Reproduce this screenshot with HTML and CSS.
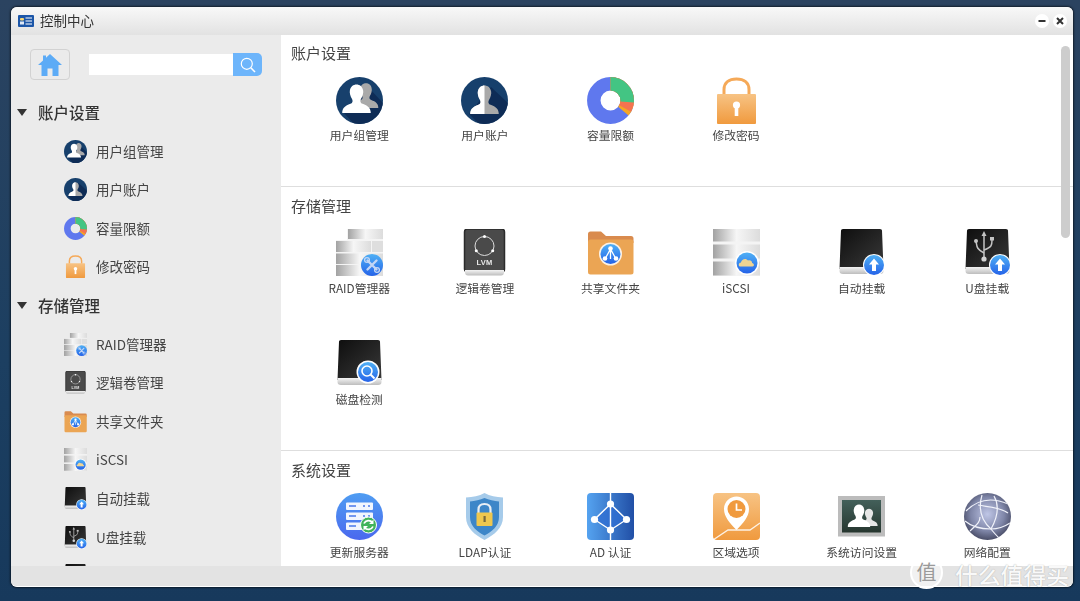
FILE: index.html
```html
<!DOCTYPE html>
<html lang="zh">
<head>
<meta charset="utf-8">
<title>控制中心</title>
<link rel="stylesheet" href="styles.css">
</head>
<body>
<svg class="defs" aria-hidden="true">
  <defs>
    <linearGradient id="gSteel" x1="0" x2="1" y1="0" y2="0"><stop offset="0" stop-color="#a2a2a2"/><stop offset=".5" stop-color="#f6f6f6"/><stop offset="1" stop-color="#dcdcdc"/></linearGradient>
    <linearGradient id="gOrange" x1="0" x2="0" y1="0" y2="1"><stop offset="0" stop-color="#f7c384"/><stop offset="1" stop-color="#f09a3e"/></linearGradient>
    <linearGradient id="gBlack" x1="0" x2="1" y1="0" y2="1"><stop offset="0" stop-color="#0e0e0e"/><stop offset="1" stop-color="#3a3a3a"/></linearGradient>
    <linearGradient id="gSilver" x1="0" x2="0" y1="0" y2="1"><stop offset="0" stop-color="#f4f4f4"/><stop offset="1" stop-color="#bdbdbd"/></linearGradient>
    <linearGradient id="gBadge" x1="0" x2="0" y1="0" y2="1"><stop offset="0" stop-color="#4fb0f5"/><stop offset="1" stop-color="#2563e8"/></linearGradient>
    <linearGradient id="gServer" x1="0" x2="0" y1="0" y2="1"><stop offset="0" stop-color="#4f9df2"/><stop offset="1" stop-color="#4a68ee"/></linearGradient>
    <linearGradient id="gAd" x1="0" x2="1" y1="0" y2="0"><stop offset="0" stop-color="#55a3f0"/><stop offset="1" stop-color="#214fa6"/></linearGradient>
    <linearGradient id="gBoard" x1="0" x2="0" y1="0" y2="1"><stop offset="0" stop-color="#43605a"/><stop offset="1" stop-color="#26362f"/></linearGradient>
    <radialGradient id="gGlobe" cx=".5" cy=".45" r=".55"><stop offset="0" stop-color="#bfc6e6"/><stop offset=".65" stop-color="#7f86a8"/><stop offset="1" stop-color="#4a4e68"/></radialGradient>
    <clipPath id="cCircle"><circle cx="23.5" cy="23.5" r="23.5"/></clipPath>
    <clipPath id="cLeft"><rect x="0" y="0" width="23.5" height="47"/></clipPath>
    <path id="person" d="M-14 0C-14-5-11-7-6-9C-3.5-10-3.5-12-4.5-14C-6-16-7-20-6.500-22C-6-26-3-28 0-28C3-28 6-26 6.500-22C7-20 6-16 4.5-14C3.5-12 3.5-10 6-9C11-7 14-5 14 0Z"/>
    <g id="diskBase">
      <path d="M3 1.5Q3 0 5 0H42Q44 0 44 1.5L45.5 40H1.5Z" fill="url(#gBlack)"/>
      <path d="M1.5 38H45.5V42Q45.5 45 42 45H5Q1.5 45 1.5 42Z" fill="url(#gSilver)"/>
    </g>
    <g id="arrowBadge">
      <circle cx="36" cy="36" r="11" fill="#fff"/>
      <circle cx="36" cy="36" r="10" fill="url(#gBadge)"/>
      <path d="M36 29.5L41 35.5H38V42H34V35.5H31Z" fill="#fff"/>
    </g>
  </defs>
  <symbol id="i-group" viewBox="0 0 47 47">
    <circle cx="23.5" cy="23.5" r="23.5" fill="#17406c"/>
    <path d="M32 10L47 26V47H18L8 36Z" fill="#0e2c56" clip-path="url(#cCircle)"/>
    <use href="#person" transform="translate(30 31) scale(.88)" fill="#a9a9a9"/>
    <use href="#person" transform="translate(20.500 36) scale(1.02)" fill="#fff"/>
  </symbol>
  <symbol id="i-user" viewBox="0 0 47 47">
    <circle cx="23.5" cy="23.5" r="23.5" fill="#17406c"/>
    <path d="M30 10L47 26V47H18L8 37Z" fill="#0e2c56" clip-path="url(#cCircle)"/>
    <use href="#person" transform="translate(23.5 37) scale(1.02)" fill="#a9a9a9"/>
    <g clip-path="url(#cLeft)"><use href="#person" transform="translate(23.5 37) scale(1.02)" fill="#fff"/></g>
  </symbol>
  <symbol id="i-quota" viewBox="0 0 47 47">
    <g fill="none" stroke-width="13.5" transform="rotate(-90 23.5 23.5)">
      <circle cx="23.5" cy="23.5" r="16.7" stroke="#5f78ee"/>
      <circle cx="23.5" cy="23.5" r="16.7" stroke="#f5a623" pathLength="100" stroke-dasharray="36 64"/>
      <circle cx="23.5" cy="23.5" r="16.7" stroke="#f57350" pathLength="100" stroke-dasharray="33 67"/>
      <circle cx="23.5" cy="23.5" r="16.7" stroke="#43c583" pathLength="100" stroke-dasharray="26.5 73.5"/>
    </g>
  </symbol>
  <symbol id="i-lock" viewBox="0 0 47 47">
    <path d="M11 18V12.5C11 5.5 16 2 23.5 2S36 5.5 36 12.5V18" fill="none" stroke="#f5a958" stroke-width="3"/>
    <rect x="4" y="17" width="39" height="30" rx="1" fill="url(#gOrange)"/>
    <circle cx="23.5" cy="28" r="3.6" fill="#fff"/>
    <rect x="21.7" y="29" width="3.6" height="10" fill="#fff"/>
  </symbol>
  <symbol id="i-raid" viewBox="0 0 47 47">
    <rect x="0" y="11" width="47" height="36" fill="#f4f4f4"/>
    <rect x="11" y="0" width="36" height="11" fill="#f4f4f4"/>
    <rect x="12" y="0" width="35" height="10" fill="url(#gSteel)"/>
    <rect x="0" y="12" width="35" height="11" fill="url(#gSteel)"/>
    <rect x="36" y="12" width="11" height="11" fill="#dedede"/>
    <rect x="0" y="24.500" width="47" height="10.500" fill="url(#gSteel)"/>
    <rect x="0" y="36" width="47" height="11" fill="url(#gSteel)"/>
    <circle cx="36" cy="36" r="11" fill="url(#gBadge)"/>
    <path d="M31.500 31.500L40.500 40.500M40.500 31.500L31.500 40.500" stroke="#c3d6f5" stroke-width="2.400" stroke-linecap="round"/>
    <circle cx="31" cy="31" r="2.400" fill="none" stroke="#c3d6f5" stroke-width="1.300"/>
    <circle cx="41" cy="41" r="2.400" fill="none" stroke="#c3d6f5" stroke-width="1.300"/>
  </symbol>
  <symbol id="i-lvm" viewBox="0 0 47 47">
    <rect x="3.500" y="0" width="40" height="43" rx="3" fill="#4a4a4a" stroke="#2b2b2b" stroke-width="1.500"/>
    <path d="M4 41H43V43Q43 46.500 40 46.500H7Q4 46.500 4 43Z" fill="url(#gSilver)"/>
    <circle cx="23.500" cy="17" r="9.500" fill="none" stroke="#dcdcdc" stroke-width="1"/>
    <circle cx="23.500" cy="7.500" r="1.500" fill="#fff"/>
    <circle cx="15.300" cy="21.700" r="1.500" fill="#fff"/>
    <circle cx="31.700" cy="21.700" r="1.500" fill="#fff"/>
    <text class="lvm-text" x="23.500" y="36" text-anchor="middle">LVM</text>
  </symbol>
  <symbol id="i-folder" viewBox="0 0 47 47">
    <path d="M1 5Q1 2.500 3.500 2.500H14L19 7H44Q46.500 7 46.500 9.500V14H1Z" fill="#d98b4e"/>
    <rect x="1" y="10.500" width="45.500" height="35" rx="2.500" fill="#eba554"/>
    <circle cx="23.500" cy="25" r="11.500" fill="#fff" fill-opacity=".85"/>
    <circle cx="23.500" cy="25" r="10" fill="url(#gBadge)"/>
    <path d="M23.500 19V25M23.500 20L18 30M23.500 20L29 30M23.500 25V30" stroke="#fff" stroke-width="1.300"/>
    <circle cx="23.500" cy="19.500" r="2.300" fill="#fff"/>
    <circle cx="18" cy="29.500" r="2.300" fill="#fff"/>
    <circle cx="29" cy="29.500" r="2.300" fill="#fff"/>
  </symbol>
  <symbol id="i-iscsi" viewBox="0 0 47 47">
    <rect x="0" y="0" width="47" height="47" fill="#f4f4f4"/>
    <rect x="0" y="0" width="47" height="12.500" fill="url(#gSteel)"/>
    <rect x="0" y="15.500" width="47" height="14" fill="url(#gSteel)"/>
    <rect x="0" y="32.500" width="47" height="14" fill="url(#gSteel)"/>
    <circle cx="34" cy="34" r="12" fill="#fff"/>
    <circle cx="34" cy="34" r="10.500" fill="url(#gBadge)"/>
    <path d="M27 37.500C25 37 25.500 33.500 28 33.500C28.500 30 33 28.500 35 31.500C37.500 30.500 39.500 32.500 39 34C41.500 34.500 41.500 37.500 39.500 37.500Z" fill="#efd493"/>
  </symbol>
  <symbol id="i-mount" viewBox="0 0 47 47">
    <use href="#diskBase"/><use href="#arrowBadge"/>
  </symbol>
  <symbol id="i-usb" viewBox="0 0 47 47">
    <use href="#diskBase"/>
    <g fill="none" stroke="#c4c4c4" stroke-width="1.500">
      <path d="M20 6V29"/>
      <path d="M20 24C12 20 13 17 12 12"/>
      <path d="M20 21C28 18 28 16 28 11"/>
    </g>
    <path d="M20 2L22.500 7H17.500Z" fill="#c4c4c4"/>
    <circle cx="12" cy="12" r="2" fill="#c4c4c4"/>
    <rect x="26" y="8" width="4" height="3.500" fill="#c4c4c4"/>
    <circle cx="20" cy="30" r="2.600" fill="#d4d4d4"/>
    <use href="#arrowBadge"/>
  </symbol>
  <symbol id="i-check" viewBox="0 0 47 47">
    <use href="#diskBase"/>
    <circle cx="32" cy="32" r="11.500" fill="#fff"/>
    <circle cx="32" cy="32" r="10" fill="url(#gBadge)"/>
    <circle cx="31" cy="31" r="5" fill="none" stroke="#fff" stroke-width="1.600"/>
    <path d="M34.500 34.500L38.500 38.500" stroke="#fff" stroke-width="2"/>
  </symbol>
  <symbol id="i-server" viewBox="0 0 47 47">
    <circle cx="23.500" cy="23.500" r="23.500" fill="url(#gServer)"/>
    <rect x="10" y="9.500" width="27" height="7.500" rx="1" fill="#fff" fill-opacity=".92"/>
    <rect x="10" y="19.500" width="27" height="7.500" rx="1" fill="#fff" fill-opacity=".92"/>
    <rect x="10" y="29.500" width="21" height="7.500" rx="1" fill="#fff" fill-opacity=".92"/>
    <path d="M13 13H20M13 23H20M13 33H20" stroke="#4a78ea" stroke-width="1.500"/>
    <path d="M27 13H29M32 13H34M27 23H29M32 23H34" stroke="#4a78ea" stroke-width="1.500"/>
    <circle cx="32.500" cy="32" r="8" fill="#41b35a" stroke="#fff" stroke-width="1"/>
    <path d="M28 30.500A5 5 0 0 1 36.500 29.500M37 33.500A5 5 0 0 1 28.500 34.500" fill="none" stroke="#fff" stroke-width="1.800"/>
    <path d="M37.500 26.500V31H33ZM27.500 37.500V33H32Z" fill="#fff"/>
  </symbol>
  <symbol id="i-ldap" viewBox="0 0 47 47">
    <path d="M23.500 0C29 3 35 4 42 4.500V24C42 35 33 42 23.500 47C14 42 5 35 5 24V4.500C12 4 18 3 23.500 0Z" fill="#a6cbea"/>
    <path d="M23.500 5C28 7 33 8 38 8.500V24C38 33 31 38.500 23.500 42.500C16 38.500 9 33 9 24V8.500C14 8 19 7 23.500 5Z" fill="#3d86c8"/>
    <path d="M17.500 20V16.500C17.500 13 20 11 23.500 11S29.500 13 29.500 16.500V20" fill="none" stroke="#e8eef5" stroke-width="2.200"/>
    <rect x="15.500" y="19.500" width="16" height="13.500" rx="1" fill="#efc74e"/>
    <rect x="22.500" y="23" width="2.200" height="6" fill="#7a6a3a"/>
  </symbol>
  <symbol id="i-ad" viewBox="0 0 47 47">
    <rect width="47" height="47" rx="4" fill="url(#gAd)"/>
    <path d="M23.500 11L7.500 26.500L23.500 37L39.500 26.500Z" fill="#2f6ed2" fill-opacity=".75"/>
    <rect x="22.800" y="0" width="1.400" height="47" fill="#fff"/>
    <path d="M23.500 11L7.500 26.500L23.500 37L39.500 26.500Z" fill="none" stroke="#fff" stroke-width="1.400"/>
    <circle cx="23.500" cy="11" r="3.600" fill="#fff"/>
    <circle cx="7.500" cy="26.500" r="3.600" fill="#fff"/>
    <circle cx="39.500" cy="26.500" r="3.600" fill="#fff"/>
    <circle cx="23.500" cy="37" r="3.600" fill="#fff"/>
  </symbol>
  <symbol id="i-region" viewBox="0 0 47 47">
    <rect width="47" height="47" rx="4" fill="url(#gOrange)"/>
    <path d="M0 47L15 37H37L47 30" fill="none" stroke="#fff" stroke-width="1.300" stroke-opacity=".85"/>
    <path d="M23.500 37C17 30 11 24 11 16C11 8.500 17 3.500 23.500 3.500S36 8.500 36 16C36 24 30 30 23.500 37Z" fill="#fff"/>
    <circle cx="23.500" cy="16" r="9" fill="#f09a3e"/>
    <path d="M23.500 10.500V17H29" fill="none" stroke="#fff" stroke-width="1.700"/>
  </symbol>
  <symbol id="i-access" viewBox="0 0 47 47">
    <rect x="0" y="3" width="47" height="40.500" fill="#bcbcbc"/>
    <rect x="4" y="7" width="39" height="32.500" fill="url(#gBoard)"/>
    <use href="#person" transform="translate(31 33) scale(.62)" fill="#e6e6e6"/>
    <use href="#person" transform="translate(21 34) scale(.8)" fill="#fff"/>
  </symbol>
  <symbol id="i-net" viewBox="0 0 47 47">
    <circle cx="23.500" cy="23.500" r="23.500" fill="url(#gGlobe)"/>
    <g fill="none" stroke="#f0f2fa" stroke-width="1.200" clip-path="url(#cCircle)">
      <path d="M2 18C14 6 28 4 44 11"/>
      <path d="M18 2C14 16 18 28 27 36C30 40 34 44 36 46"/>
      <path d="M1 28C8 34 18 36 27 36C34 36 40 34 46 30"/>
      <path d="M30 3C34 10 36 20 27 36"/>
      <path d="M14 12C24 14 36 14 44 20"/>
      <path d="M6 38C12 32 16 30 16 24"/>
    </g>
  </symbol>
</svg>

<div class="window">
  <header class="titlebar">
    <svg class="title-icon" viewBox="0 0 16 12"><rect width="16" height="12" rx="1" fill="#1c56a8"/><rect x="2" y="3" width="4" height="2.500" rx="1" fill="#f7d774"/><rect x="2" y="6.500" width="4" height="3" fill="#dfe9f7"/><path d="M7.500 3H14M7.500 6H14M7.500 9H14" stroke="#fff" stroke-width="1.100"/></svg>
    <span class="title-text">控制中心</span>
    <span class="win-btn"><svg viewBox="0 0 14 14"><path d="M3.500 7H10.500" stroke="#333" stroke-width="2"/></svg></span>
    <span class="win-btn"><svg viewBox="0 0 14 14"><path d="M4 4L10 10M10 4L4 10" stroke="#333" stroke-width="2"/></svg></span>
  </header>

  <div class="body">
    <aside class="sidebar">
      <div class="side-top">
        <button class="home-btn"><svg viewBox="0 0 24 22"><path d="M12 0L24 11H20.500V22H14.500V14.500H9.500V22H3.500V11H0L5 6.500V1.500H8V3.800Z" fill="#5cabf6"/></svg></button>
        <div class="search">
          <span class="search-input"></span>
          <span class="search-btn"><svg viewBox="0 0 16 16"><circle cx="6.800" cy="6.800" r="5.500" fill="none" stroke="#fff" stroke-width="1.200"/><path d="M10.800 10.800L15 15" stroke="#fff" stroke-width="1.600"/></svg></span>
        </div>
      </div>
      <div class="side-group"><i class="tri"></i><span class="side-label">账户设置</span></div>
      <div class="side-item"><svg class="side-ico"><use href="#i-group"/></svg><span class="side-label">用户组管理</span></div>
      <div class="side-item"><svg class="side-ico"><use href="#i-user"/></svg><span class="side-label">用户账户</span></div>
      <div class="side-item"><svg class="side-ico"><use href="#i-quota"/></svg><span class="side-label">容量限额</span></div>
      <div class="side-item"><svg class="side-ico"><use href="#i-lock"/></svg><span class="side-label">修改密码</span></div>
      <div class="side-group"><i class="tri"></i><span class="side-label">存储管理</span></div>
      <div class="side-item"><svg class="side-ico"><use href="#i-raid"/></svg><span class="side-label">RAID管理器</span></div>
      <div class="side-item"><svg class="side-ico"><use href="#i-lvm"/></svg><span class="side-label">逻辑卷管理</span></div>
      <div class="side-item"><svg class="side-ico"><use href="#i-folder"/></svg><span class="side-label">共享文件夹</span></div>
      <div class="side-item"><svg class="side-ico"><use href="#i-iscsi"/></svg><span class="side-label">iSCSI</span></div>
      <div class="side-item"><svg class="side-ico"><use href="#i-mount"/></svg><span class="side-label">自动挂载</span></div>
      <div class="side-item"><svg class="side-ico"><use href="#i-usb"/></svg><span class="side-label">U盘挂载</span></div>
      <div class="side-item"><svg class="side-ico"><use href="#i-check"/></svg><span class="side-label">磁盘检测</span></div>
    </aside>

    <main class="main">
      <section class="sec sec-first">
        <h2 class="sec-title">账户设置</h2>
        <div class="grid">
          <div class="cell"><svg class="ico"><use href="#i-group"/></svg><span>用户组管理</span></div>
          <div class="cell"><svg class="ico"><use href="#i-user"/></svg><span>用户账户</span></div>
          <div class="cell"><svg class="ico"><use href="#i-quota"/></svg><span>容量限额</span></div>
          <div class="cell"><svg class="ico"><use href="#i-lock"/></svg><span>修改密码</span></div>
        </div>
      </section>
      <section class="sec">
        <h2 class="sec-title">存储管理</h2>
        <div class="grid">
          <div class="cell"><svg class="ico"><use href="#i-raid"/></svg><span>RAID管理器</span></div>
          <div class="cell"><svg class="ico"><use href="#i-lvm"/></svg><span>逻辑卷管理</span></div>
          <div class="cell"><svg class="ico"><use href="#i-folder"/></svg><span>共享文件夹</span></div>
          <div class="cell"><svg class="ico"><use href="#i-iscsi"/></svg><span>iSCSI</span></div>
          <div class="cell"><svg class="ico"><use href="#i-mount"/></svg><span>自动挂载</span></div>
          <div class="cell"><svg class="ico"><use href="#i-usb"/></svg><span>U盘挂载</span></div>
          <div class="cell"><svg class="ico"><use href="#i-check"/></svg><span>磁盘检测</span></div>
        </div>
      </section>
      <section class="sec sec-last">
        <h2 class="sec-title">系统设置</h2>
        <div class="grid">
          <div class="cell"><svg class="ico"><use href="#i-server"/></svg><span>更新服务器</span></div>
          <div class="cell"><svg class="ico"><use href="#i-ldap"/></svg><span>LDAP认证</span></div>
          <div class="cell"><svg class="ico"><use href="#i-ad"/></svg><span>AD 认证</span></div>
          <div class="cell"><svg class="ico"><use href="#i-region"/></svg><span>区域选项</span></div>
          <div class="cell"><svg class="ico"><use href="#i-access"/></svg><span>系统访问设置</span></div>
          <div class="cell"><svg class="ico"><use href="#i-net"/></svg><span>网络配置</span></div>
        </div>
      </section>
      <div class="scrollbar"></div>
    </main>
  </div>
  <footer class="footer"></footer>
</div>

<div class="watermark"><span class="wm-badge">值</span><span class="wm-text">什么值得买</span></div>
</body>
</html>
```

FILE: styles.css
```css
* { box-sizing: border-box; }
html, body { margin: 0; height: 100%; }
body {
  height: 601px;
  overflow: hidden;
  padding: 7px 7px 14px 11px;
  background: linear-gradient(180deg, #2b4360 0%, #1c3f61 60%, #17395c 100%);
  font-family: "Noto Sans CJK SC", "Liberation Sans", sans-serif;
  color: #3c3c3c;
}
.defs { position: absolute; width: 0; height: 0; }
.lvm-text { font: bold 7.5px "Liberation Sans", sans-serif; fill: #e8e8e8; letter-spacing: .3px; }

.window {
  width: 1062px;
  height: 580px;
  display: flex;
  flex-direction: column;
  background: #ebebeb;
  border-radius: 6px;
  overflow: hidden;
  box-shadow: 0 0 2px 1px rgba(0, 0, 0, .55);
  border-bottom: 1px solid #fff;
  filter: blur(.3px);
}

.titlebar {
  height: 28px;
  flex: none;
  display: flex;
  align-items: center;
  padding: 0 6px 0 7px;
  gap: 4px;
  background: linear-gradient(180deg, #f8f8f8, #e2e2e2);
}
.title-icon { width: 16px; height: 12px; margin-right: 2px; }
.title-text { font-size: 13.500px; color: #333; flex: 1; line-height: 26px; height: 28px; }
.win-btn { width: 14px; height: 14px; border-radius: 50%; background: #fff; display: block; }
.win-btn svg { display: block; width: 14px; height: 14px; }

.body { flex: 1; min-height: 0; display: flex; }

.sidebar { width: 270px; flex: none; overflow: hidden; background: #ebebeb; }
.side-top { height: 58.200px; display: flex; align-items: flex-start; padding: 14px 0 0 19px; }
.home-btn {
  width: 40px;
  height: 31px;
  padding: 0;
  border: 1px solid #d2d2d2;
  border-radius: 4px;
  background: #ebebeb;
  display: flex;
  align-items: center;
  justify-content: center;
}
.home-btn svg { width: 24px; height: 22px; }
.search { display: flex; margin: 4px 0 0 19px; align-items: center; }
.search-input { width: 144px; height: 21px; background: #fff; display: block; }
.search-btn {
  width: 29px;
  height: 23px;
  background: #6db5fb;
  border-radius: 0 5px 5px 0;
  display: flex;
  align-items: center;
  justify-content: center;
}
.search-btn svg { width: 16px; height: 16px; }

.side-group {
  height: 38.600px;
  display: flex;
  align-items: center;
  font-size: 15.500px;
  font-weight: 500;
  color: #333;
  padding-left: 6px;
}
.tri {
  width: 0;
  height: 0;
  border-left: 5px solid transparent;
  border-right: 5px solid transparent;
  border-top: 7px solid #333;
  margin-right: 11px;
}
.side-label { line-height: 20px; margin-top: -1px; }
.side-item {
  height: 38.600px;
  display: flex;
  align-items: center;
  font-size: 13.500px;
  color: #444;
  padding-left: 53px;
}
.side-ico { width: 23px; height: 23px; margin-right: 9px; flex: none; }

.main { flex: 1; position: relative; overflow: hidden; background: #fff; }
.sec { border-bottom: 1px solid #dedede; padding: 8px 0 0 15.500px; }
.sec-last { border-bottom: 0; }
.sec-title { margin: 0 0 12px -5.500px; font-size: 15px; line-height: 22px; font-weight: 400; color: #444; }
.sec-first .sec-title { line-height: 20px; margin-bottom: 14px; }
.grid {
  display: grid;
  grid-template-columns: repeat(6, 125.600px);
  grid-auto-rows: 110px;
  row-gap: 1px;
}
.sec-first .grid { grid-auto-rows: 109px; }
.cell { display: flex; flex-direction: column; align-items: center; font-size: 11.800px; color: #444; }
.cell span { line-height: 18px; margin-top: 3px; white-space: nowrap; }
.sec-first .cell span { margin-top: 2px; }
.ico { width: 47px; height: 47px; flex: none; }

.scrollbar {
  position: absolute;
  right: 3px;
  top: 11px;
  width: 9px;
  height: 192px;
  border-radius: 5px;
  background: #cdcdcd;
}

.footer { height: 20px; flex: none; background: #e3e3e3; }

.watermark {
  position: absolute;
  left: 910px;
  top: 556px;
  display: flex;
  align-items: center;
  height: 33px;
  color: rgba(255, 255, 255, .95);
  text-shadow: 0 0 1px rgba(110, 110, 110, .6);
}
.wm-badge {
  width: 33px;
  height: 33px;
  border-radius: 50%;
  border: 2px solid #fff;
  background: rgba(255, 255, 255, .5);
  font-size: 20px;
  line-height: 27px;
  text-align: center;
  color: #9a9a9a;
  text-shadow: none;
  margin-right: 12px;
}
.wm-text {
  font-family: "Liberation Sans", "Noto Sans CJK SC", sans-serif;
  font-size: 22.800px;
  font-weight: 500;
  line-height: 22px;
  margin-top: 7px;
}
```
